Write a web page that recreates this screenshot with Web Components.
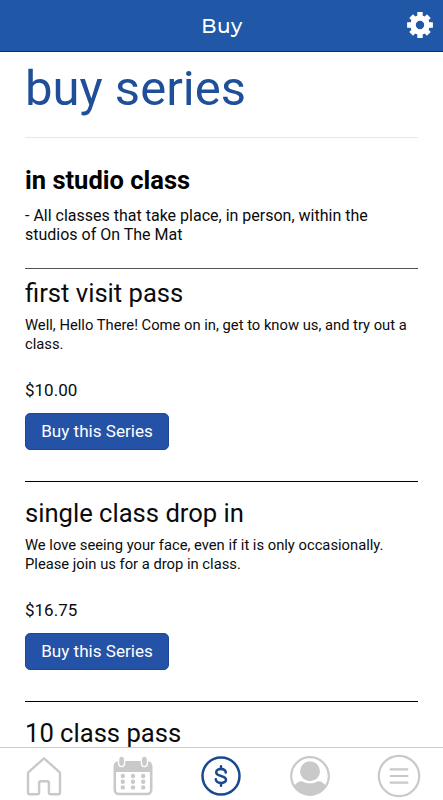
<!DOCTYPE html>
<html lang="en">
<head>
<meta charset="utf-8">
<meta name="viewport" content="width=device-width, initial-scale=1">
<title>Buy</title>
<style>
  body {
    margin: 0;
    height: 100vh;
    overflow: hidden;
    display: flex;
    flex-direction: column;
    background: #fff;
    color: #0b0b0b;
    font-family: Roboto, sans-serif;
  }
</style>
</head>
<body>
  <app-header>Buy</app-header>
  <series-list heading="buy series">
    <series-category name="in studio class">- All classes that take place, in person, within the studios of On The Mat</series-category>
    <series-item name="first visit pass" price="$10.00" first>Well, Hello There! Come on in, get to know us, and try out a class.</series-item>
    <series-item name="single class drop in" price="$16.75">We love seeing your face, even if it is only occasionally. Please join us for a drop in class.</series-item>
    <series-item name="10 class pass"></series-item>
  </series-list>
  <tab-bar>
    <tab-icon name="home"></tab-icon>
    <tab-icon name="calendar"></tab-icon>
    <tab-icon name="buy" active></tab-icon>
    <tab-icon name="profile"></tab-icon>
    <tab-icon name="menu"></tab-icon>
  </tab-bar>

<script>
class AppHeader extends HTMLElement {
  constructor() {
    super();
    this.attachShadow({ mode: 'open' });
  }

  connectedCallback() {
    this.shadowRoot.innerHTML = `
      <style>
        :host {
          flex: none;
          box-sizing: border-box;
          height: 52px;
          display: grid;
          grid-template-columns: 1fr auto 1fr;
          align-items: center;
          padding: 0 10px 1px;
          background: #2057a7;
          border-bottom: 1px solid #0b2f70;
          color: #fff;
        }
        h1 {
          grid-column: 2;
          margin: 0;
          padding: 1px 0 0 1px;
          font: 500 20px/26px Montserrat, Inter, sans-serif;
          letter-spacing: 0.5px;
        }
        svg {
          justify-self: end;
          display: block;
        }
      </style>
      <h1><slot></slot></h1>
      <svg width="26" height="26" viewBox="-13 -13 26 26" fill="none" stroke="#fff">
        <circle r="7" stroke-width="5.6"/>
        <g stroke-width="5.4">
          <path d="M0-12.9V-8M0 8v4.9M-12.9 0H-8M8 0h4.9"/>
          <path d="M0-12.5V-8M0 8v4.5M-12.5 0H-8M8 0h4.5" transform="rotate(45)"/>
        </g>
      </svg>
    `;
  }
}

class SeriesList extends HTMLElement {
  constructor() {
    super();
    this.attachShadow({ mode: 'open' });
  }

  connectedCallback() {
    this.shadowRoot.innerHTML = `
      <style>
        :host {
          flex: 1;
          min-height: 0;
          overflow: hidden;
          display: block;
          padding: 7px 25px 0;
        }
        h2 {
          margin: 0;
          padding-bottom: 18px;
          border-bottom: 1px solid #e8e8e8;
          color: #1f4f99;
          font-size: 49px;
          font-weight: 400;
          line-height: 60px;
        }
      </style>
      <h2>${this.getAttribute('heading')}</h2>
      <slot></slot>
    `;
  }
}

class SeriesCategory extends HTMLElement {
  constructor() {
    super();
    this.attachShadow({ mode: 'open' });
  }

  connectedCallback() {
    this.shadowRoot.innerHTML = `
      <style>
        :host {
          display: block;
          padding: 27px 0 24px;
        }
        h3 {
          margin: 0 0 11px;
          color: #000;
          font-size: 25.5px;
          font-weight: 700;
          line-height: 30px;
        }
        p {
          margin: 0;
          font-size: 16px;
          line-height: 19px;
        }
      </style>
      <h3>${this.getAttribute('name')}</h3>
      <p><slot></slot></p>
    `;
  }
}

class SeriesItem extends HTMLElement {
  constructor() {
    super();
    this.attachShadow({ mode: 'open' });
  }

  connectedCallback() {
    const price = this.getAttribute('price');

    this.shadowRoot.innerHTML = `
      <style>
        :host {
          display: block;
          padding: 16px 0 31px;
          border-top: 1px solid #000;
        }
        :host([first]) {
          padding-top: 9px;
          border-top-color: #555;
        }
        h3 {
          margin: 0 0 8px;
          font-size: 25.6px;
          font-weight: 400;
          line-height: 30px;
        }
        p {
          margin: 0 0 26px;
          font-size: 14.75px;
          line-height: 19px;
        }
        .price {
          margin-bottom: 13px;
          font-size: 17px;
          line-height: 20px;
        }
        button {
          display: block;
          box-sizing: border-box;
          width: 144px;
          height: 37px;
          padding: 0;
          border: 1px solid #1d489a;
          border-radius: 5px;
          background: #2452a6;
          color: #fff;
          font: 17.1px/35px Roboto, sans-serif;
        }
      </style>
      <h3>${this.getAttribute('name')}</h3>
      ${price ? `
        <p><slot></slot></p>
        <div class="price">${price}</div>
        <button type="button">Buy this Series</button>
      ` : ''}
    `;
  }
}

class TabBar extends HTMLElement {
  constructor() {
    super();
    this.attachShadow({ mode: 'open' });
  }

  connectedCallback() {
    this.shadowRoot.innerHTML = `
      <style>
        :host {
          flex: none;
          box-sizing: border-box;
          height: 53px;
          display: grid;
          grid-template-columns: repeat(5, 1fr);
          border-top: 1px solid #cdcdcd;
          background: #fff;
        }
      </style>
      <slot></slot>
    `;
  }
}

// All icons share a 44x44 box centred on the origin
const icons = {
  home: `
    <path d="M0-17.7L-16-3.4V16.4Q-16 18.3-14 18.3H-6.6Q-4.9 18.3-4.9 16.5V7.3Q-4.9 5.3-3 5.3H3Q4.9 5.3 4.9 7.3V16.5Q4.9 18.3 6.6 18.3H14Q16 18.3 16 16.4V-3.4Z"
      fill="none" stroke="currentColor" stroke-width="2.4" stroke-linejoin="round"/>`,
  calendar: `
    <rect x="-18.2" y="-13.8" width="36.4" height="31.8" rx="4" fill="none" stroke="currentColor" stroke-width="2.6"/>
    <path d="M-18-4V-11Q-18-14-15-14H15Q18-14 18-11V-4Z" fill="currentColor"/>
    <g fill="currentColor" stroke="#fff" stroke-width="1.3">
      <rect x="-14.4" y="-19.8" width="6" height="10.4" rx="3"/>
      <rect x="8.4" y="-19.8" width="6" height="10.4" rx="3"/>
    </g>
    <g fill="currentColor">
      <circle cx="-10.2" cy="0" r="2.2"/><circle cx="0" cy="0" r="2.2"/><circle cx="10.2" cy="0" r="2.2"/>
      <circle cx="-10.2" cy="5.7" r="2.2"/><circle cx="0" cy="5.7" r="2.2"/><circle cx="10.2" cy="5.7" r="2.2"/>
      <circle cx="-10.2" cy="11.4" r="2.2"/><circle cx="0" cy="11.4" r="2.2"/><circle cx="10.2" cy="11.4" r="2.2"/>
    </g>`,
  buy: `
    <g fill="none" stroke="currentColor" stroke-width="2.5" stroke-linecap="round">
      <circle r="18.5"/>
      <path d="M0-9.8V-7M0 7V9.8"/>
      <path d="M4.8-3.4C4.6-8-4.8-8.3-4.8-3.6C-4.8 .8 5 -.9 5 3.7C5 8.2-5 8-5.2 3.3"/>
    </g>`,
  profile: `
    <circle r="18.8" fill="none" stroke="currentColor" stroke-width="2.2"/>
    <circle cy="-4.8" r="10" fill="currentColor"/>
    <path d="M-16 10C-13.3 6-9.8 4.6-7.4 5.4C-3 7.9 3 7.9 7.4 5.4C9.8 4.6 13.3 6 16 10A18.9 18.9 0 0 1-16 10Z" fill="currentColor"/>`,
  menu: `
    <g fill="none" stroke="currentColor" stroke-width="2.2">
      <circle r="20.2"/>
      <path d="M-8.4-6.7H8.4M-8.4 0H8.4M-8.4 6.7H8.4" stroke-linecap="round"/>
    </g>`
};

class TabIcon extends HTMLElement {
  constructor() {
    super();
    this.attachShadow({ mode: 'open' });
  }

  connectedCallback() {
    this.shadowRoot.innerHTML = `
      <style>
        :host {
          display: flex;
          justify-content: center;
          padding-top: 6px;
          color: #c9c9c9;
        }
        :host([active]) {
          color: #18498f;
        }
        svg {
          display: block;
        }
      </style>
      <svg width="44" height="44" viewBox="-22 -22 44 44">${icons[this.getAttribute('name')]}</svg>
    `;
  }
}

customElements.define('app-header', AppHeader);
customElements.define('series-list', SeriesList);
customElements.define('series-category', SeriesCategory);
customElements.define('series-item', SeriesItem);
customElements.define('tab-bar', TabBar);
customElements.define('tab-icon', TabIcon);
</script>
</body>
</html>
